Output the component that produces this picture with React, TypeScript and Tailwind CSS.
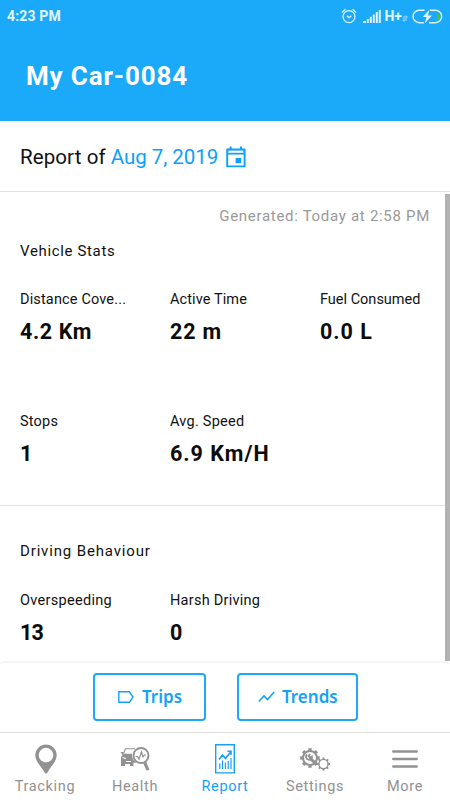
import React from 'react';

function StatusBar() {
  return (
    <div className="flex h-8 items-center justify-between pl-[7px] pr-[7px] text-[#e4f4ff]">
      <span className="text-[14px] font-bold leading-8 tracking-[0.15px]">4:23 PM</span>
      <div className="flex items-center">
        <svg width="16" height="16" viewBox="0 0 16 16" fill="none" stroke="currentColor" strokeWidth="1.3" className="mr-[6px]">
          <circle cx="8" cy="8.6" r="6" />
          <path d="M5.8 7.8 8 9.6l2.4-1.8M1 4.4 4.4 1.2M15 4.4l-3.4-3.2" />
        </svg>
        <svg width="18" height="14" viewBox="0 0 18 14" fill="currentColor" className="mr-[3px]">
          <path d="M0 12h3v2H0zM3.8 10h2v4h-2zM6.8 7.8h2V14h-2zM9.8 5.4h2V14h-2zM12.8 3h2v11h-2zM15.8 1h2v13h-2z" />
        </svg>
        <span className="text-[14px] font-bold leading-8">H+</span>
        <svg width="6" height="7" viewBox="0 0 6 7" fill="none" stroke="currentColor" strokeWidth="0.9" className="mr-1 mt-[5px] opacity-80">
          <path d="M2 1v5.4L.6 4.8M4 6V.8l1.4 1.6" />
        </svg>
        <svg width="31" height="15" viewBox="0 0 31 15" fill="none">
          <path d="M12.5 1.2H7.3a6.2 6.2 0 0 0 0 12.5h4.500M18 1.200h5.400a6.200 6.200 0 0 1 0 12.500H17" stroke="currentColor" strokeWidth="1.400" />
          <path d="M17.500.5 10.800 8h3.800l-2 6.500L20 6.600h-4z" fill="currentColor" />
          <path d="M25 4.500q3.200 0 3.200 3t-3.200 3z" fill="#4fc51b" />
        </svg>
      </div>
    </div>
  );
}

type StatProps = { label: string; value: string; tracking?: string; valueTracking?: string };

function Stat({ label, value, tracking = 'tracking-[0.2px]', valueTracking = 'tracking-[0.6px]' }: StatProps) {
  return (
    <div className="w-[150px] shrink-0">
      <div className={`h-8 whitespace-nowrap text-[14.5px] leading-[33px] ${tracking}`}>{label}</div>
      <div className={`h-[34px] whitespace-nowrap text-[21.5px] font-bold leading-[34px] text-[#0c0c0c] ${valueTracking}`}>{value}</div>
    </div>
  );
}

function NavItem({ label, active, children }: { label: string; active?: boolean; children: React.ReactNode }) {
  return (
    <div className={`flex w-[90px] flex-col items-center ${active ? 'text-[#159ff5]' : 'text-[#929292]'}`}>
      <div className="flex h-[52px] items-center justify-center">{children}</div>
      <span className="-mt-2 h-5 text-[14.5px] leading-5 tracking-[0.65px]">{label}</span>
    </div>
  );
}

const gear = (cx: number, cy: number, r: number, n: number) =>
  Array.from({ length: n }, (_, i) => {
    const a = (i * 2 * Math.PI) / n;
    return `M${cx + r * Math.cos(a)} ${cy + r * Math.sin(a)}L${cx + (r + 2.3) * Math.cos(a)} ${cy + (r + 2.3) * Math.sin(a)}`;
  }).join('');

export default function App() {
  return (
    <div className="flex h-[800px] w-[450px] flex-col overflow-hidden bg-white font-[Roboto,sans-serif] text-[#111]">
      <header className="h-[121px] shrink-0 bg-[#1ba9f9]">
        <StatusBar />
        <h1 className="pl-[26px] pt-[26px] text-[26px] font-bold leading-[36px] tracking-[0.85px] text-white">My Car-0084</h1>
      </header>

      <div className="flex h-[71px] shrink-0 items-center border-b border-[#e2e2e2] pl-5 pt-[2px]">
        <span className="whitespace-nowrap text-[20.5px] leading-8 tracking-[0.1px]">
          Report of <span className="tracking-[-0.05px] text-[#0ca0fb]">Aug 7, 2019</span>
        </span>
        <svg width="20" height="22" viewBox="0 0 20 22" className="ml-2 text-[#0ca0fb]">
          <path d="M1.2 3.4h17.4v17H1.2zM1.2 7.6h17.4" fill="none" stroke="currentColor" strokeWidth="1.9" strokeLinejoin="round" />
          <path d="M1 3h18v3H1zM3.6.5h2V4h-2zM14 .5h2V4h-2zM9.6 12h5.6v5.2H9.6z" fill="currentColor" />
          <path d="M2.5 4.6h14.8v1.6H2.5z" fill="#fff" />
        </svg>
      </div>

      <main className="flex h-[469px] shrink-0 justify-between">
        <div className="w-[445px] pt-2">
          <div className="h-8 whitespace-nowrap pr-[15px] text-right text-[15px] leading-8 tracking-[0.7px] text-[#999]">Generated: Today at 2:58 PM</div>
          <h2 className="mt-[3px] h-8 pl-5 text-[15px] leading-8 tracking-[0.65px]">Vehicle Stats</h2>
          <div className="mt-4 flex pl-5">
            <Stat label="Distance Cove..." value="4.2 Km" tracking="tracking-[0.15px]" />
            <Stat label="Active Time" value="22 m" tracking="tracking-[0.1px]" valueTracking="tracking-[0.8px]" />
            <Stat label="Fuel Consumed" value="0.0 L" tracking="tracking-[0px]" valueTracking="tracking-[1px]" />
          </div>
          <div className="mt-[56px] flex pl-5">
            <Stat label="Stops" value="1" />
            <Stat label="Avg. Speed" value="6.9 Km/H" tracking="tracking-[0.25px]" valueTracking="tracking-[1px]" />
          </div>
          <div className="mt-[34px] border-t border-[#e2e2e2]" />
          <h2 className="mt-[29px] h-8 pl-5 text-[15px] leading-8 tracking-[0.85px]">Driving Behaviour</h2>
          <div className="mt-[17px] flex pl-5">
            <Stat label="Overspeeding" value="13" tracking="tracking-[0.3px]" valueTracking="tracking-[-0.8px]" />
            <Stat label="Harsh Driving" value="0" tracking="tracking-[0.25px]" />
          </div>
        </div>
        <div className="mt-[2px] w-[5px] bg-[#b3b3b3]" />
      </main>

      <div className="flex h-[72px] shrink-0 gap-[31px] rounded-t-[4px] border-b border-t-2 border-b-[#e2e2e2] border-t-[#f5f5f5] pl-[93px] pt-[10px] font-['Noto_Sans',sans-serif] text-[17px] font-semibold text-[#14a2f8]">
        <button className="flex h-12 w-[113px] items-center rounded-[4px] border-2 border-[#1ba9f9] pl-[23px]">
          <svg width="16" height="12" viewBox="0 0 16 12" fill="none" stroke="currentColor" strokeWidth="1.4">
            <path d="M.8.8h10.6L15 6l-3.6 5.2H.8z" />
          </svg>
          <span className="ml-2">Trips</span>
        </button>
        <button className="flex h-12 w-[121px] items-center rounded-[4px] border-2 border-[#1ba9f9] pl-[19px]">
          <svg width="17" height="12" viewBox="0 0 17 12" fill="none" stroke="currentColor" strokeWidth="1.6">
            <path d="M.7 10.5 6 5l3.5 3.6L16.2 1" />
          </svg>
          <span className="ml-[7px]">Trends</span>
        </button>
      </div>

      <nav className="flex h-[67px] shrink-0">
        <NavItem label="Tracking">
          <svg width="22" height="30" viewBox="0 0 22 30" fill="currentColor" className="ml-[1px]">
            <path fillRule="evenodd" d="M11 .5A10.7 10.7 0 0 0 .3 11.2C.3 17.5 6 22 9.2 28q1.8 3 3.6 0C16 22 21.7 17.5 21.7 11.2A10.7 10.7 0 0 0 11 .5Zm0 3.3a7.3 7.3 0 1 1 0 14.6 7.3 7.3 0 0 1 0-14.6Z" />
          </svg>
        </NavItem>
        <NavItem label="Health">
          <svg width="30" height="26" viewBox="0 0 30 26" fill="none" stroke="currentColor">
            <path d="M3.5 7.500 5.500 2.700H15" strokeWidth="1.100" />
            <path d="M.5 6h2.800v1.800H12a9 9 0 0 0 5 9h-3.500V20H10v-2H5v2H1v-9l1.500-2Z" fill="currentColor" stroke="none" />
            <path d="M2.500 11.500l3.500 1.200M6 15.500h5" stroke="#fff" strokeWidth="1.100" />
            <circle cx="21" cy="9.500" r="7.500" strokeWidth="1.900" fill="#fff" />
            <path d="m15.500 10.500 2 0 1.500 2.500 2.500-7 1.500 5 1.500-2h1.500" strokeWidth="1.200" />
            <path d="m24.500 16 3.500 8.200" strokeWidth="3.200" />
          </svg>
        </NavItem>
        <NavItem label="Report" active>
          <svg width="20" height="30" viewBox="0 0 20 30" fill="none" stroke="currentColor">
            <path d="M.7.7h18.600v28.200H.7z" strokeWidth="1.400" />
            <path d="M4 15.500 7.500 11l3 3.500L16 7.500M12.500 7.200H16v3.500" strokeWidth="1.600" />
            <path d="M4.800 25v-5.500M7.600 25v-8.500M10.400 25v-6.500M13.200 25v-8M16 25V14" strokeWidth="1.200" />
          </svg>
        </NavItem>
        <NavItem label="Settings">
          <svg width="30" height="23" viewBox="0 0 30 23" fill="none" stroke="currentColor">
            <circle cx="10" cy="10" r="7" strokeWidth="2" />
            <path d={gear(10, 10, 7.4, 8)} strokeWidth="3.4" />
            <path d="m9.500 10 7 6" strokeWidth="3" />
            <path d="M7 6.500a3 3 0 1 0 5 2L10 9.500 8.500 8 10 6" strokeWidth="1.800" />
            <circle cx="23.500" cy="16" r="4.600" strokeWidth="1.300" fill="#fff" />
            <path d={gear(23.5, 16, 4.2, 8)} strokeWidth="2" />
          </svg>
        </NavItem>
        <NavItem label="More">
          <svg width="26" height="18" viewBox="0 0 26 18" fill="none" stroke="currentColor" strokeWidth="2.3" strokeLinecap="round">
            <path d="M1.2 1.5h23.6M1.2 9h23.6M1.2 16.5h23.6" />
          </svg>
        </NavItem>
      </nav>
    </div>
  );
}
